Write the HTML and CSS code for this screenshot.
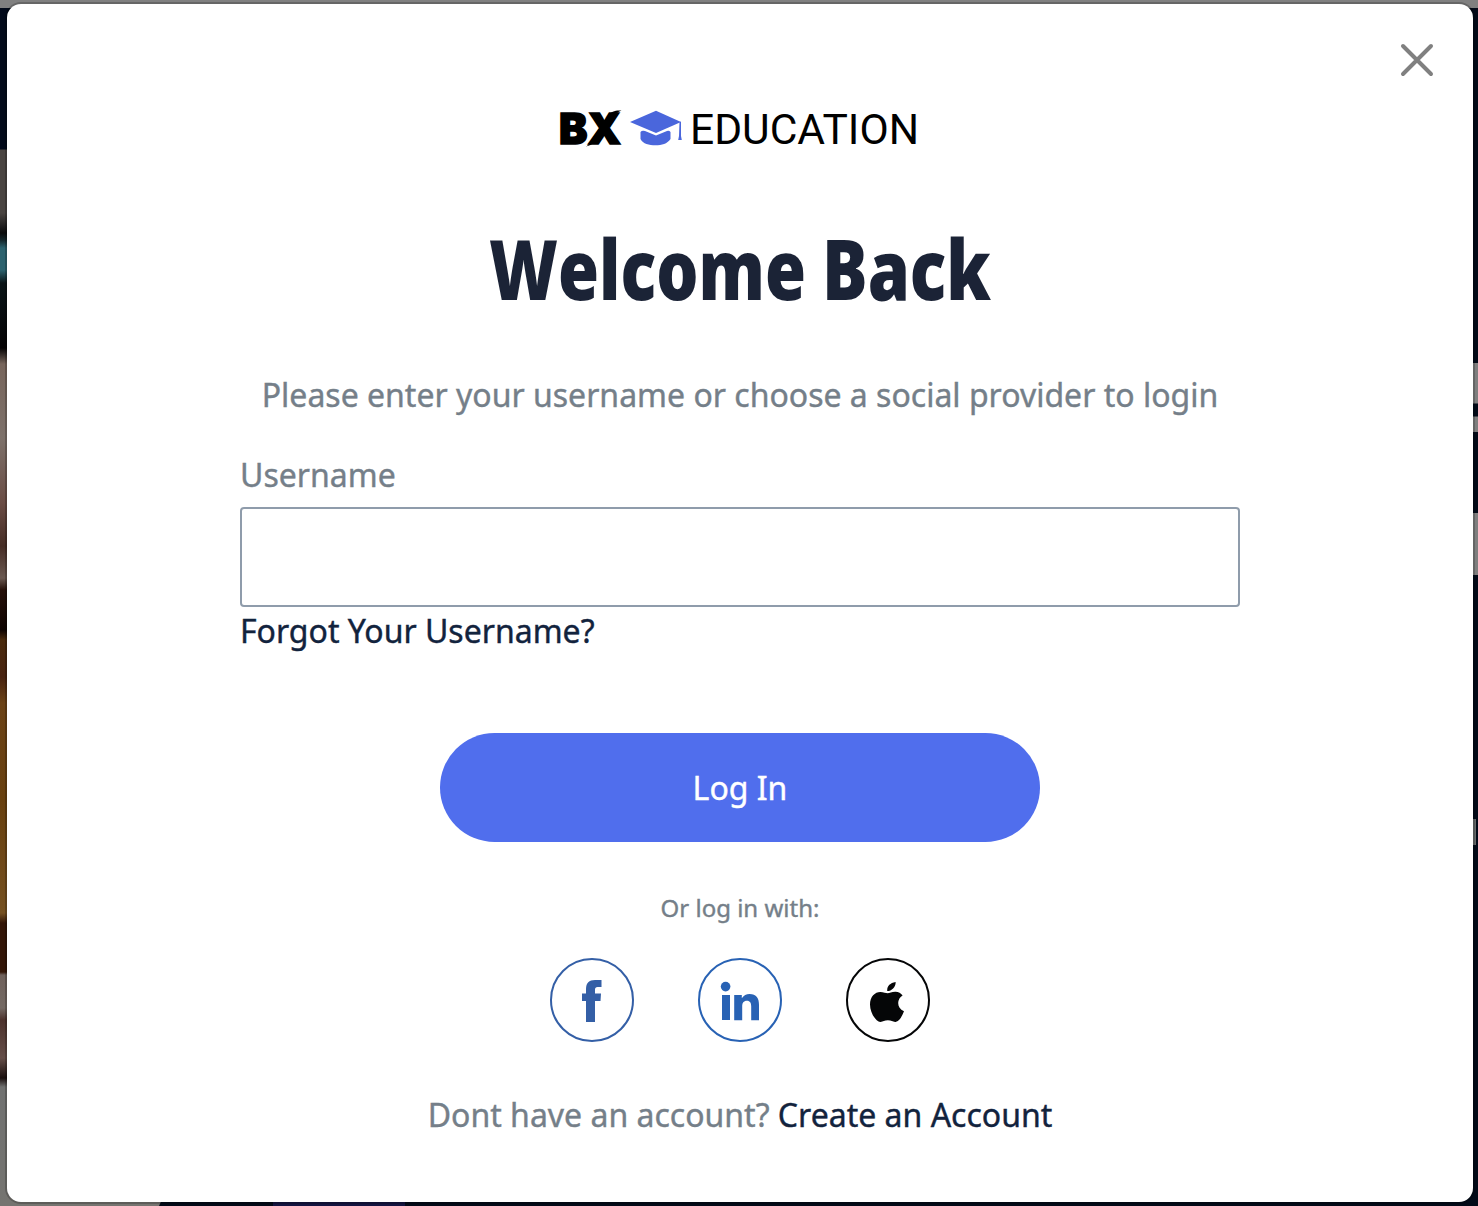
FILE: index.html
```html
<!DOCTYPE html>
<html lang="en">
<head>
<meta charset="utf-8">
<title>BX Education – Log In</title>
<link rel="stylesheet" href="styles.css">
</head>
<body>
<main class="modal">
  <button class="close" aria-label="Close">
    <svg width="34" height="34" viewBox="0 0 34 34"><path d="M3 3 31 31M31 3 3 31"/></svg>
  </button>
  <svg class="logo" width="360" height="40" viewBox="0 0 360 40">
    <text class="logo-bx" x="-1" y="35" textLength="62" lengthAdjust="spacingAndGlyphs">BX</text>
    <path d="M26 37.500C33 36 36 32 41 25L51 11C54 6 57 3 61.500 1.500C56 1 51 2 48 7L34 27C31 32 29 36 26 37.500Z"/>
    <g class="cap">
      <path d="M70 13 96 1.800 121 13 96 24Z"/>
      <path d="M80.500 23Q82 21 85 22L96 26.500 107 22Q109 21 110.500 23V30C107 35 102 36.300 95.500 36.300S83 35 80.500 30Z"/>
      <path d="M119.500 12.800H121V27L121.800 31H118.200L119 27Z"/>
    </g>
    <text class="logo-name" x="130" y="34.500" textLength="229" lengthAdjust="spacingAndGlyphs">EDUCATION</text>
  </svg>
  <h1 class="title">
    <svg width="504" height="90" viewBox="0 0 504 90"><text y="74"><tspan x="1" textLength="317" lengthAdjust="spacingAndGlyphs">Welcome</tspan> <tspan x="334" textLength="169" lengthAdjust="spacingAndGlyphs">Back</tspan></text></svg>
  </h1>
  <p class="intro">Please enter your username or choose a social provider to login</p>
  <form class="form">
    <label for="username">Username</label>
    <input id="username" type="text">
    <a class="link">Forgot Your Username?</a>
    <button class="submit" type="button">Log In</button>
  </form>
  <p class="or">Or log in with:</p>
  <div class="socials">
    <a class="social facebook" aria-label="Facebook">
      <svg width="84" height="84" viewBox="0 0 84 84"><path d="M36 64V43H32V35.500H36V31C36 25 39 22 45 22H51.500V29H47.500Q45 29 45 31.500V35.500H51L50.500 43H45V64Z"/></svg>
    </a>
    <a class="social linkedin" aria-label="LinkedIn">
      <svg width="84" height="84" viewBox="0 0 84 84"><circle cx="27.600" cy="28.600" r="4.800"/><path d="M24 37H32V62H24ZM36.200 37H43.800V40.300C45.500 37.500 48.500 36 51.500 36C58.500 36 61 40 61 47V62.300H53.200V48.500C53.200 45 52 42.800 49 42.800C45.500 42.800 44.200 45 44.200 48.500V62.300H36.200Z"/></svg>
    </a>
    <a class="social apple" aria-label="Apple">
      <svg width="84" height="84" viewBox="0 0 84 84"><path d="M41.200 33C41 28 44 25 49.600 24C50 28.500 46 33 41.200 33ZM41.500 35.200C43.500 35.200 46 33.600 49.500 33.700C52.500 33.800 55 35.200 56.600 37.400C50.500 41 50.500 50 58 53.200C56 58 53.500 63.700 49.500 63.900C46.500 64 45.500 62.300 41.900 62.300C38.300 62.300 37 64 34.300 63.900C30 63.700 24 55 24 46.500C24 38.500 29 33.900 34.300 33.900C37.500 33.900 40 35.200 41.500 35.200Z"/></svg>
    </a>
  </div>
  <p class="signup">Dont have an account? <a class="link">Create an Account</a></p>
</main>
</body>
</html>
```
FILE: styles.css
```css
* { box-sizing: border-box; }

body {
  margin: 0;
  height: 1206px;
  padding: 4px 5px 4px 7px;
  overflow: hidden;
  font: 32px/48px "Noto Sans", sans-serif;
  -webkit-text-stroke: .4px;
  color: #757f89;
  background-color: #020a18;
  background-repeat: no-repeat;
  background-image:
    linear-gradient(#808080, #808080),
    linear-gradient(#020a1a 0 141px, #494441 142px 205px, #0b0b0c 225px, #14262b 232px, #2c626e 240px 262px, #0a1417 275px, #050304 340px, #77655b 356px, #7d716a 430px, #6a4c44 495px, #462d25 538px, #6a5850 570px, #261009 582px, #0e0300 622px, #4a2a0c 632px, #482310 669px, #6b4216 695px, #68400f 792px, #755020 905px, #331607 915px 964px, #6f615b 967px, #746963 1000px, #4c322c 1012px, #654e48 1050px, #1a0f0e 1070px, #707170 1079px, #757470 1198px),
    linear-gradient(115deg, #757470 0 152px, #020a18 153px),
    linear-gradient(#131440, #131440),
    linear-gradient(#7f7f7f 0 40px, #020a18 41px 53px, #7f7f7f 54px),
    linear-gradient(#7f7f7f, #7f7f7f),
    linear-gradient(#676b6b, #676b6b);
  background-size: 100% 8px, 7px 1198px, 180px 20px, 132px 6px, 5px 69px, 5px 62px, 3px 26px;
  background-position: 0 0, 0 8px, 0 1186px, 273px 1200px, 1473px 363px, 1473px 513px, 1473px 819px;
}

.modal {
  height: 1198px;
  display: flex;
  flex-direction: column;
  align-items: center;
  background: #fff;
  border-radius: 14px;
  box-shadow: 0 0 0 2px rgba(0, 0, 0, .2);
}

p, h1 { margin: 0; }
button { font: inherit; border: 0; padding: 0; }

.close {
  align-self: flex-end;
  height: 34px;
  margin: 39px 39px 0 0;
  background: none;
  line-height: 0;
}
.close path { fill: none; stroke: #808080; stroke-width: 4; stroke-linecap: round; }

.logo { margin-top: 32px; overflow: visible; flex: none; -webkit-text-stroke: 0; }
.logo-bx { font: 900 43px Inter, sans-serif; stroke: #000; stroke-width: 1.5px; }
.logo-name { font: 400 43px Roboto, sans-serif; }
.cap { fill: #4a66dc; }

.title { height: 90px; margin-top: 77px; line-height: 0; -webkit-text-stroke: 0; }
.title svg { overflow: visible; }
.title text { font: 800 83px/1 "Open Sans", "Noto Sans", sans-serif; fill: #1b2336; }

.intro { margin-top: 55px; white-space: nowrap; }

.form {
  width: 1000px;
  margin-top: 32px;
  display: flex;
  flex-direction: column;
  align-items: flex-start;
}
.form input {
  width: 100%;
  height: 100px;
  margin-top: 8px;
  padding: 0 24px;
  border: 2px solid #8f9cab;
  border-radius: 4px;
  background: #fff;
  font: inherit;
}
.link { color: #12233d; }

.submit {
  align-self: center;
  width: 600px;
  height: 109px;
  margin-top: 78px;
  border-radius: 55px;
  background: #506eed;
  color: #fff;
}

.or { margin-top: 48px; font-size: 24px; line-height: 36px; }

.socials { display: flex; gap: 64px; margin-top: 32px; }
.social {
  width: 84px;
  height: 84px;
  border: 2px solid;
  border-radius: 50%;
}
.social svg { display: block; margin: -2px; fill: currentColor; }
.facebook { color: #345fa6; }
.linkedin { color: #2862b4; }
.apple { color: #050607; }

.signup { margin-top: 49px; }
```
